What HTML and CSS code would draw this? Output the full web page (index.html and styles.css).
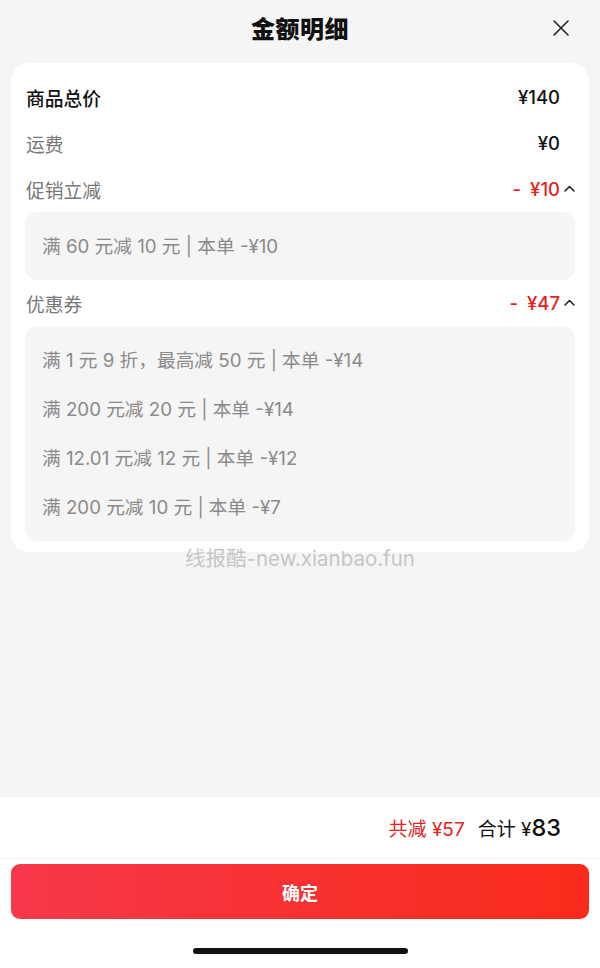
FILE: index.html
```html
<!DOCTYPE html>
<html lang="zh-CN">
<head>
<meta charset="utf-8">
<title>金额明细</title>
<link rel="stylesheet" href="styles.css">
</head>
<body>
<div class="page">
  <header class="header">
    <h1 class="title">金额明细</h1>
    <span class="close">
      <svg width="16" height="16" viewBox="0 0 16 16"><path d="M1 1L15 15M15 1L1 15" stroke="#222" stroke-width="1.6" fill="none" stroke-linecap="round"/></svg>
    </span>
  </header>

  <main class="main">
    <section class="card">
      <div class="row">
        <span class="label strong">商品总价</span>
        <span class="val"><span class="amount">¥140</span><span class="caret-slot"></span></span>
      </div>
      <div class="row">
        <span class="label">运费</span>
        <span class="val"><span class="amount">¥0</span><span class="caret-slot"></span></span>
      </div>
      <div class="row">
        <span class="label">促销立减</span>
        <span class="val"><span class="amount red"><span class="minus">-</span>¥10</span><span class="caret-slot"><svg width="11" height="7" viewBox="0 0 11 7"><path d="M1 6L5.5 1.5L10 6" stroke="#222" stroke-width="1.6" fill="none" stroke-linecap="round" stroke-linejoin="round"/></svg></span></span>
      </div>
      <div class="detail">
        <p class="line">满 60 元减 10 元 | 本单 -¥10</p>
      </div>
      <div class="row">
        <span class="label">优惠券</span>
        <span class="val"><span class="amount red"><span class="minus">-</span>¥47</span><span class="caret-slot"><svg width="11" height="7" viewBox="0 0 11 7"><path d="M1 6L5.5 1.5L10 6" stroke="#222" stroke-width="1.6" fill="none" stroke-linecap="round" stroke-linejoin="round"/></svg></span></span>
      </div>
      <div class="detail">
        <p class="line">满 1 元 9 折，最高减 50 元 | 本单 -¥14</p>
        <p class="line">满 200 元减 20 元 | 本单 -¥14</p>
        <p class="line">满 12.01 元减 12 元 | 本单 -¥12</p>
        <p class="line">满 200 元减 10 元 | 本单 -¥7</p>
      </div>
    </section>
    <div class="watermark">线报酷-new.xianbao.fun</div>
  </main>

  <footer class="footer">
    <div class="summary">
      <span class="saved">共减 ¥57</span>
      <span class="total">合计 ¥<span class="total-num">83</span></span>
    </div>
    <div class="btn-wrap">
      <button class="btn">确定</button>
    </div>
    <div class="home-wrap"><span class="home"></span></div>
  </footer>
</div>
</body>
</html>
```

FILE: styles.css
```css
* { box-sizing: border-box; }
html, body { margin: 0; padding: 0; }
body {
  background: #f5f5f5;
  font-family: Inter, "Noto Sans CJK SC", "Noto Sans", sans-serif;
  color: #111;
}
.page {
  width: 600px;
  height: 968px;
  display: flex;
  flex-direction: column;
  background: #f5f5f5;
}
.header {
  position: relative;
  height: 56px;
  display: flex;
  align-items: center;
  justify-content: center;
  margin-bottom: 7px;
}
.title {
  margin: 0;
  font-family: "Noto Sans CJK SC", sans-serif;
  font-size: 24px;
  font-weight: 900;
  line-height: 56px;
  color: #111;
  letter-spacing: 0.5px;
}
.close {
  position: absolute;
  right: 31px;
  top: 20px;
  width: 16px;
  height: 16px;
  display: flex;
}
.main {
  flex: 1;
  position: relative;
}
.card {
  margin: 0 11px;
  background: #fff;
  border-radius: 18px;
  padding: 11px 14px;
}
.row {
  height: 46px;
  display: flex;
  align-items: center;
  justify-content: space-between;
  padding-left: 1px;
  font-size: 18.75px;
}
.label { color: #777; }
.label.strong { color: #111; font-weight: 500; }
.val {
  display: flex;
  align-items: center;
}
.amount { color: #111; font-size: 18.5px; font-weight: 500; }
.amount.red { color: #e1251b; }
.minus { margin-right: 9px; }
.caret-slot {
  width: 15px;
  display: flex;
  justify-content: flex-end;
  padding-bottom: 2px;
}
.detail {
  background: #f5f5f5;
  border-radius: 12px;
  padding: 9.5px 17px;
}
.line {
  margin: 0;
  height: 49px;
  line-height: 49px;
  font-size: 18.7px;
  color: #8a8a8a;
}
.watermark {
  position: absolute;
  left: 0;
  right: 0;
  top: 484px;
  text-align: center;
  font-size: 20.5px;
  color: #c6c6c6;
  line-height: 24px;
}
.footer {
  background: #fff;
  height: 171px;
  display: flex;
  flex-direction: column;
}
.summary {
  height: 62px;
  display: flex;
  align-items: center;
  justify-content: flex-end;
  gap: 13px;
  padding-right: 39px;
  border-bottom: 1px solid #efefef;
  font-size: 19px;
}
.saved { color: #e1251b; }
.total { color: #111; }
.total-num { font-size: 23.5px; font-weight: 500; }
.btn-wrap {
  padding: 5px 11px 0;
}
.btn {
  width: 100%;
  height: 55px;
  border: none;
  border-radius: 9px;
  background: linear-gradient(90deg, #f6384b 0%, #f7302c 60%, #f92b1b 100%);
  color: #fff;
  font-family: "Noto Sans CJK SC", "Noto Sans", sans-serif;
  font-size: 18px;
  font-weight: 700;
}
.home-wrap {
  flex: 1;
  display: flex;
  justify-content: center;
  padding-top: 29px;
}
.home {
  width: 215px;
  height: 6px;
  border-radius: 3px;
  background: #111;
}
```
